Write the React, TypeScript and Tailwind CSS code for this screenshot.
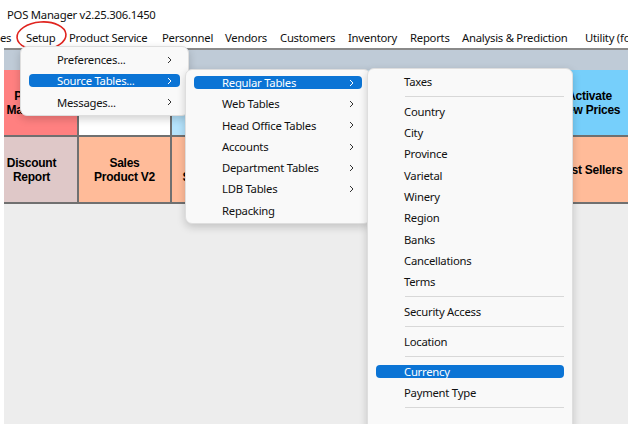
import React from "react";

const UI_FONT = "font-['Noto_Sans','Open_Sans',sans-serif]";
const TILE_FONT = "font-['Liberation_Sans',Arial,sans-serif]";

// menu bar items with their slot widths
const menuBar: [string, string][] = [
  ["es", "w-[26px]"],
  ["Setup", "w-[43px]"],
  ["Product Service", "w-[93px]"],
  ["Personnel", "w-[63px]"],
  ["Vendors", "w-[55px]"],
  ["Customers", "w-[68px]"],
  ["Inventory", "w-[62px]"],
  ["Reports", "w-[52px]"],
  ["Analysis & Prediction", "w-[123px]"],
  ["Utility (for", "w-[60px]"],
];

type Tile = { lines: string[]; bg: string };

const row1: Tile[] = [
  { lines: ["Prices", "Maintain."], bg: "bg-[#ff8080]" },
  { lines: [], bg: "bg-white" },
  { lines: ["Customer", "Lookup"], bg: "bg-[#b5e3fc]" },
  { lines: ["Inventory", "Count"], bg: "bg-[#b5e3fc]" },
  { lines: ["Purchase", "Orders"], bg: "bg-[#b5e3fc]" },
  { lines: ["Receiving"], bg: "bg-[#b5e3fc]" },
  { lines: ["Activate", "New Prices"], bg: "bg-[#76cffb]" },
];

const row2: Tile[] = [
  { lines: ["Discount", "Report"], bg: "bg-[#dfc8c8]" },
  { lines: ["Sales", "Product V2"], bg: "bg-[#ffbb99]" },
  { lines: ["Sales", "Summary V2"], bg: "bg-[#ffbb99]" },
  { lines: ["Sales", "By Dept"], bg: "bg-[#ffbb99]" },
  { lines: ["Sales", "By Hour"], bg: "bg-[#ffbb99]" },
  { lines: ["Slow Movers"], bg: "bg-[#ffbb99]" },
  { lines: ["Best Sellers"], bg: "bg-[#ffbb99]" },
];

type Entry = { label: string; sub?: boolean; active?: boolean } | "sep";

const setupMenu: Entry[] = [
  { label: "Preferences...", sub: true },
  { label: "Source Tables...", sub: true, active: true },
  { label: "Messages...", sub: true },
];

const sourceMenu: Entry[] = [
  { label: "Regular Tables", sub: true, active: true },
  { label: "Web Tables", sub: true },
  { label: "Head Office Tables", sub: true },
  { label: "Accounts", sub: true },
  { label: "Department Tables", sub: true },
  { label: "LDB Tables", sub: true },
  { label: "Repacking" },
];

const regularMenu: Entry[] = [
  { label: "Taxes" },
  "sep",
  { label: "Country" },
  { label: "City" },
  { label: "Province" },
  { label: "Varietal" },
  { label: "Winery" },
  { label: "Region" },
  { label: "Banks" },
  { label: "Cancellations" },
  { label: "Terms" },
  "sep",
  { label: "Security Access" },
  "sep",
  { label: "Location" },
  "sep",
  { label: "Currency", active: true },
  { label: "Payment Type" },
  "sep",
];

function Chevron({ light }: { light?: boolean }) {
  return (
    <svg width="5" height="8" viewBox="0 0 5 8" className="shrink-0">
      <path
        d="M1 1 L4 4 L1 7"
        fill="none"
        stroke={light ? "#ffffff" : "#333333"}
        strokeWidth="1"
      />
    </svg>
  );
}

function PopupMenu({ items, className }: { items: Entry[]; className: string }) {
  return (
    <div
      className={`absolute rounded-[7px] border border-[#dedede] bg-[#f9f9f9] pt-[2px] pb-[2px] shadow-[0_3px_8px_rgba(0,0,0,0.18)] ${className}`}
    >
      {items.map((it, i) =>
        it === "sep" ? (
          <div key={i} className="flex h-[8.6px] items-center pl-[37px] pr-[8px]">
            <div className="h-px w-full bg-[#d8d8d8]" />
          </div>
        ) : (
          <div key={i} className="flex h-[21.3px] items-center px-[8px]">
            <div
              className={`flex h-[13px] w-full items-center rounded-[4px] pl-[28px] pr-[8px] ${
                it.active ? "bg-[#0b74d5] text-white" : "text-[#111]"
              }`}
            >
              <span className="flex-1 whitespace-nowrap leading-none">{it.label}</span>
              {it.sub && <Chevron light={it.active} />}
            </div>
          </div>
        )
      )}
    </div>
  );
}

function TileRow({ tiles }: { tiles: Tile[] }) {
  return (
    <div className="ml-[-18px] flex">
      {tiles.map((t, i) => (
        <div
          key={i}
          className={`flex h-[67px] w-[93px] shrink-0 flex-col items-center justify-center border-r-2 border-b-2 border-[#707070] text-center text-[12px] leading-[14px] font-bold whitespace-nowrap text-black ${TILE_FONT} ${t.bg}`}
        >
          {t.lines.map((l) => (
            <span key={l}>{l}</span>
          ))}
        </div>
      ))}
    </div>
  );
}

export default function App() {
  return (
    <div
      className={`relative h-[424px] w-[641px] overflow-hidden bg-white text-[11.3px] tracking-[-0.25px] ${UI_FONT}`}
    >
      <div className="h-[28px] pl-[7px] pt-[9px] leading-none text-[#111]">POS Manager v2.25.306.1450</div>

      <div className="flex h-[20px] w-[628px] items-center overflow-hidden whitespace-nowrap text-[#111]">
        {menuBar.map(([m, w]) => (
          <span key={m} className={`shrink-0 ${w}`}>
            {m}
          </span>
        ))}
      </div>

      {/* application window body */}
      <div className="mx-[4px] h-[376px] w-[624px] overflow-hidden border-t-2 border-[#8a8a8a] bg-[#ededed]">
        <div className="h-[20px] bg-[#bfcbd7]" />
        <TileRow tiles={row1} />
        <TileRow tiles={row2} />
      </div>

      {/* red highlight around Setup */}
      <svg className="absolute left-[14px] top-[19px]" width="56" height="35" viewBox="0 0 56 35">
        <ellipse
          cx="27.5"
          cy="17"
          rx="24.5"
          ry="14"
          transform="rotate(-4 27.5 17)"
          fill="none"
          stroke="#e0241f"
          strokeWidth="1.6"
        />
      </svg>

      <PopupMenu items={setupMenu} className="left-[20px] top-[46px] w-[169px]" />
      <PopupMenu items={sourceMenu} className="left-[185px] top-[69px] w-[186px]" />
      <PopupMenu items={regularMenu} className="left-[367px] top-[68px] h-[380px] w-[206px]" />
    </div>
  );
}
